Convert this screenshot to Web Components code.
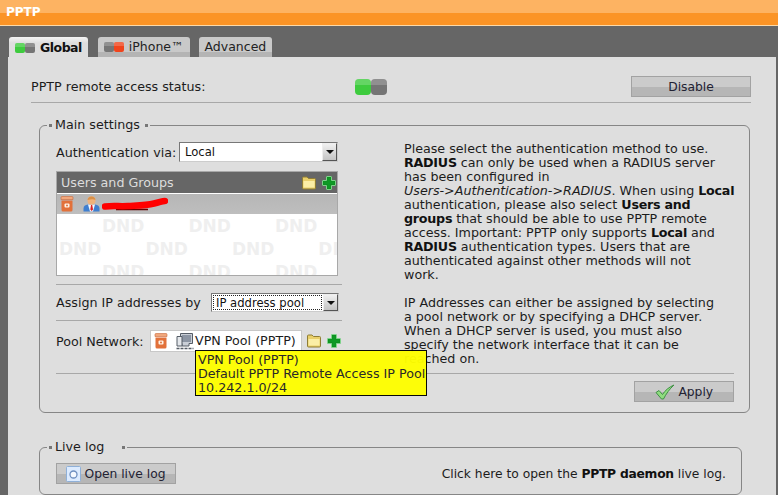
<!DOCTYPE html>
<html lang="en">
  <head>
    <meta charset="UTF-8">
    <title>PPTP</title>
    <style>
      html, body { margin: 0; height: 495px; overflow: hidden; background: #666; }
      body { font: 12.7px/14px "DejaVu Sans", Verdana, sans-serif; color: #1c1c1c; }
      b { color: #111; letter-spacing: -.25px; }
    </style>
  </head>
  <body>
    <pv-header>PPTP</pv-header>
    <pv-tabs>
      <pv-tab active><pv-led on="left"></pv-led>Global</pv-tab>
      <pv-tab><pv-led on="right" tone="red"></pv-led>iPhone™</pv-tab>
      <pv-tab>Advanced</pv-tab>
    </pv-tabs>
    <pv-panel>
      <pv-status>
        PPTP remote access status:
        <pv-led slot="led" on="left" size="big"></pv-led>
        <pv-button slot="action" width="120">Disable</pv-button>
      </pv-status>

      <pv-group label="Main settings">
        <pv-form>
          <pv-field slot="left" label="123" pad="0 0 9px">
            Authentication via:
            <pv-select slot="control" width="159" height="20">Local</pv-select>
          </pv-field>
          <pv-list slot="left" title="Users and Groups">
            <pv-icon name="trash"></pv-icon>
            <pv-icon name="user"></pv-icon>
            <pv-icon name="scribble"></pv-icon>
          </pv-list>
          <pv-field slot="left" label="155" line above="8" pad="8px 0 8px">
            Assign IP addresses by
            <pv-select slot="control" width="128" height="19" focus>IP address pool</pv-select>
          </pv-field>
          <pv-field slot="left" label="94" line pad="9px 0 0">
            Pool Network:
            <pv-chip slot="control">
              VPN Pool (PPTP)
              <pv-tooltip slot="tip">VPN Pool (PPTP)<br>Default PPTP Remote Access IP Pool<br>10.242.1.0/24</pv-tooltip>
            </pv-chip>
          </pv-field>

          <div slot="right">
            Please select the authentication method to use.<br>
            <b>RADIUS</b> can only be used when a RADIUS server<br>
            has been configured in<br>
            <i>Users-&gt;Authentication-&gt;RADIUS</i>. When using <b>Local</b><br>
            authentication, please also select <b>Users and</b><br>
            <b>groups</b> that should be able to use PPTP remote<br>
            access. Important: PPTP only supports <b>Local</b> and<br>
            <b>RADIUS</b> authentication types. Users that are<br>
            authenticated against other methods will not<br>
            work.<br>
            <br>
            IP Addresses can either be assigned by selecting<br>
            a pool network or by specifying a DHCP server.<br>
            When a DHCP server is used, you must also<br>
            specify the network interface that it can be<br>
            reached on.
          </div>

          <pv-button slot="footer" width="100" icon="check">Apply</pv-button>
        </pv-form>
      </pv-group>

      <pv-group label="Live log" tail="18" top="27">
        <pv-logrow>
          <pv-button slot="action" width="120" icon="log">Open live log</pv-button>
          Click here to open the <b>PPTP daemon</b> live log.
        </pv-logrow>
      </pv-group>
    </pv-panel>

    <script>
      const icons = {
        folder: `<svg width="16" height="14" viewBox="0 0 16 14">
          <path d="M1.5 3V2Q1.5 1 2.5 1H6L7.5 2.5H13.5Q14.5 2.5 14.5 3.500V12Q14.500 13 13.500 13H2.500Q1.500 13 1.500 12Z" fill="#e9cf6a" stroke="#8f7d35"/>
          <path d="M2.500 5H13.500V11.500H2.500Z" fill="#fbeea6"/>
        </svg>`,
        plus: `<svg width="16" height="16" viewBox="0 0 16 16">
          <path d="M6 1.500H10Q10.500 1.500 10.500 2V5.500H14Q14.500 5.500 14.500 6V10Q14.500 10.500 14 10.500H10.500V14Q10.500 14.500 10 14.500H6Q5.500 14.500 5.500 14V10.500H2Q1.500 10.500 1.500 10V6Q1.500 5.500 2 5.500H5.500V2Q5.500 1.500 6 1.500Z" fill="#0f8f22" stroke="#7ed48a"/>
          <path d="M6.500 3H9.500V6.500H13V9H9.500V13H6.500V9H3V6.500H6.500Z" fill="#0e9a25"/>
        </svg>`,
        trash: `<svg width="14" height="16" viewBox="0 0 14 16">
          <path d="M1 1.500Q1 .5 2 .5H12Q13 .5 13 1.500V3.500H1Z" fill="#f1a77c" stroke="#c9683a" stroke-width=".6"/>
          <path d="M1.500 4.500H12.500V14Q12.500 15.500 11 15.500H3Q1.500 15.500 1.500 14Z" fill="#e2713a"/>
          <rect x="4.500" y="7.500" width="5" height="4" rx="1" fill="#fff3e6"/>
          <circle cx="7" cy="9.500" r="1" fill="#e2713a"/>
        </svg>`,
        user: `<svg width="17" height="16" viewBox="0 0 17 16">
          <path d="M.5 15.500V12.500Q.5 9 5 8.500H12Q16.500 9 16.500 12.500V15.500Z" fill="#3f7fd0"/>
          <path d="M5 8.500H12L10 15.500H7Z" fill="#f4f8ff"/>
          <path d="M8 9H9.200L10 13.500 8.600 15 7.300 13.500Z" fill="#d22"/>
          <ellipse cx="8.500" cy="4.500" rx="4" ry="4.200" fill="#f0b27a"/>
          <path d="M4.500 4Q5 .5 8.500 .5T12.500 4Q10 2.500 4.500 4Z" fill="#d89048"/>
        </svg>`,
        scribble: `<svg width="66" height="14" viewBox="0 0 66 14">
          <path d="M14 12.500H46" stroke="#600" stroke-width="1.500"/>
          <path d="M3 9.500C10 8.500 18 9.500 26 9S44 8.500 52 6.500 60 4 63 4" fill="none" stroke="#f00" stroke-width="6.500" stroke-linecap="round"/>
        </svg>`,
        network: `<svg width="18" height="18" viewBox="0 0 18 18">
          <path d="M4.500 1.500H16.500V11.500H13V14H6V11.500H4.500Z" fill="#c9ced6" stroke="#555c66"/>
          <path d="M6 3H15V10H6Z" fill="#8c95a3"/>
          <path d="M1 4.500H6V14H1Z" fill="#e5e8ec" stroke="#555c66"/>
          <path d="M.5 16.500H17.500" stroke="#555c66" stroke-width="1.500" stroke-dasharray="3 1"/>
        </svg>`,
        check: `<svg width="20" height="16" viewBox="0 0 20 16">
          <path d="M1 8.500L4 6.500 7.500 10.500C10 6.500 14 3 19 1C14.500 5 11 10 8.500 15H6.500Z" fill="#8fdc7f" stroke="#3f8f45"/>
        </svg>`,
        log: `<svg width="15" height="16" viewBox="0 0 15 16">
          <rect x=".5" y=".5" width="14" height="15" rx="1" fill="#dcebff" stroke="#8fb0d8"/>
          <circle cx="7.500" cy="8.500" r="3.500" fill="#f5f9ff" stroke="#6f8fc0" stroke-width="1.300"/>
        </svg>`
      }

      // every element is just a template and a shadow root, small helper for that
      const define = (name, html) => {
        const template = document.createElement('template')
        template.innerHTML = html
        customElements.define(name, class extends HTMLElement {
          constructor() {
            super()
            this.attachShadow({ mode: 'open' }).appendChild(template.content.cloneNode(true))
          }
        })
      }

      define('pv-header', `
        <style>
          :host { display: block; height: 25px; border-bottom: 1px solid #fcd9a8; background: linear-gradient(#fdb362 0 13px, #fb9426 13px); }
          div { padding: 5px 0 0 6px; color: #fff; font-weight: bold; font-size: 12px; }
        </style>
        <div><slot></slot></div>`)

      define('pv-tabs', `
        <style>
          :host { display: flex; gap: 9px; height: 20px; padding: 11px 0 0 9px; align-items: flex-start; position: relative; z-index: 1; font-size: 12.5px; }
          ::slotted(:first-child) { margin-right: 1px; }
        </style>
        <slot></slot>`)

      define('pv-tab', `
        <style>
          :host { display: flex; align-items: center; gap: 5px; height: 20px; padding: 0 6px; border-radius: 3px 3px 0 0; background: linear-gradient(#c9c9c9 0 15px, #b4b4b4 15px); color: #222; }
          :host([active]) { height: 21px; background: linear-gradient(#f4f4f4, #dedede 6px); font-weight: bold; letter-spacing: -.5px; color: #111; }
        </style>
        <slot></slot>`)

      customElements.define('pv-led', class extends HTMLElement {
        constructor() {
          super()
          const big = this.getAttribute('size') === 'big'
          const s = big ? 16 : 10
          const on = this.getAttribute('tone') === 'red' ? '#f0441c' : '#3ecb3e'
          const left = this.getAttribute('on') === 'left' ? on : '#757575'
          const right = this.getAttribute('on') === 'right' ? on : '#757575'
          this.attachShadow({ mode: 'open' }).innerHTML = `
            <style>
              :host { display: inline-flex; }
              i { display: block; width: ${s}px; height: ${s}px; border-radius: ${big ? 4 : 2}px; }
              i::before { content: ""; display: block; height: 40%; border-radius: ${big ? '4px 4px' : '2px 2px'} 0 0; background: #fff3; }
            </style>
            <i style="background:${left}"></i><i style="background:${right}"></i>`
        }
      })

      customElements.define('pv-icon', class extends HTMLElement {
        constructor() {
          super()
          this.attachShadow({ mode: 'open' }).innerHTML = `
            <style>:host { display: inline-flex; } svg { display: block; }</style>
            ${icons[this.getAttribute('name')]}`
        }
      })

      customElements.define('pv-button', class extends HTMLElement {
        constructor() {
          super()
          const icon = this.getAttribute('icon')
          this.attachShadow({ mode: 'open' }).innerHTML = `
            <style>
              :host { display: flex; align-items: center; justify-content: center; gap: 3px; box-sizing: border-box; height: 21px; padding-top: 1px; width: ${this.getAttribute('width')}px; border: 1px solid #a2a2a2; background: linear-gradient(#cbcbcb 0 10px, #b6b6b6 10px); color: #223; font-size: 12.3px; letter-spacing: 0; }
              svg { margin-top: -1px; }
            </style>
            ${icon ? icons[icon] : ''}<slot></slot>`
        }
      })

      define('pv-panel', `
        <style>
          :host { display: block; height: 500px; margin: 0 2px 0 8px; padding: 19px 25px 0 23px; background: #dedede; }
        </style>
        <slot></slot>`)

      define('pv-status', `
        <style>
          :host { display: flex; align-items: center; height: 21px; padding-bottom: 5px; border-bottom: 1px solid #a8a8a8; }
          .text { width: 324px; padding-top: 1px; }
          .led { flex: 1; display: flex; }
        </style>
        <div class="text"><slot></slot></div>
        <div class="led"><slot name="led"></slot></div>
        <slot name="action"></slot>`)

      customElements.define('pv-group', class extends HTMLElement {
        constructor() {
          super()
          const tail = this.getAttribute('tail') || 5
          this.attachShadow({ mode: 'open' }).innerHTML = `
            <style>
              :host { display: block; margin: ${this.getAttribute('top') || 15}px 9px 0 8px; }
              fieldset { margin: 0; padding: 0 15px 10px 16px; border: 1px solid #868686; border-radius: 6px; }
              legend { display: flex; align-items: center; margin-left: -9px; padding: 0 0 0 2px; height: 14px; line-height: 14px; }
              legend::before, legend::after { content: ""; width: 3px; height: 3px; background: #777; }
              legend::before { margin-right: 3px; }
              legend::after { margin-left: ${tail}px; margin-right: 2px; }
            </style>
            <fieldset>
              <legend>${this.getAttribute('label')}</legend>
              <slot></slot>
            </fieldset>`
        }
      })

      define('pv-form', `
        <style>
          :host { display: grid; grid-template-columns: 286px 1fr; column-gap: 62px; padding-top: 10px; }
          .left { display: flex; flex-direction: column; }
          .right { white-space: nowrap; }
          .footer { grid-column: 1 / 3; display: flex; justify-content: flex-end; margin-top: 7px; padding-top: 7px; border-top: 1px solid #a8a8a8; }
        </style>
        <div class="left"><slot name="left"></slot></div>
        <div class="right"><slot name="right"></slot></div>
        <div class="footer"><slot name="footer"></slot></div>`)

      customElements.define('pv-field', class extends HTMLElement {
        constructor() {
          super()
          this.attachShadow({ mode: 'open' }).innerHTML = `
            <style>
              :host { display: flex; align-items: center; padding: ${this.getAttribute('pad')}; margin-top: ${this.getAttribute('above') || 0}px; }
              :host([line]) { border-top: 1px solid #a8a8a8; }
              .label { flex: none; width: ${this.getAttribute('label')}px; padding-top: 1px; white-space: nowrap; }
            </style>
            <div class="label"><slot></slot></div><slot name="control"></slot>`
        }
      })

      customElements.define('pv-select', class extends HTMLElement {
        constructor() {
          super()
          this.attachShadow({ mode: 'open' }).innerHTML = `
            <style>
              :host { display: flex; box-sizing: border-box; height: ${this.getAttribute('height')}px; width: ${this.getAttribute('width')}px; background: #fff; border: 1px solid #8d8d8d; border-color: #777 #ccc #ccc #777; font-size: 11.6px; line-height: 17px; color: #111; }
              .value { flex: 1; margin: 1px; padding-left: 4px; }
              :host([focus]) .value { padding-left: 3px; outline: 1px dotted #222; outline-offset: -1px; }
              .arrow { display: flex; align-items: center; justify-content: center; width: 15px; background: linear-gradient(#f0f0f0, #c4c4c4); border: 1px solid; border-color: #eee #555 #555 #eee; box-sizing: border-box; }
              .arrow::after { content: ""; border: 4px solid transparent; border-top: 4px solid #111; border-bottom: 0; }
            </style>
            <div class="value"><slot></slot></div>
            <div class="arrow"></div>`
        }
      })

      customElements.define('pv-list', class extends HTMLElement {
        constructor() {
          super()
          const row = '<span>DND</span>'.repeat(4)
          this.attachShadow({ mode: 'open' }).innerHTML = `
            <style>
              :host { display: block; position: relative; box-sizing: border-box; width: 282px; height: 105px; border: 1px solid #a8a8a8; background: #fff; overflow: hidden; }
              .head { display: flex; align-items: center; gap: 4px; height: 21px; padding-left: 4px; background: #666; color: #ddd; border-bottom: 1px solid #fff; }
              .head span { flex: 1; }
              .row { position: relative; display: flex; align-items: center; height: 20px; padding-left: 3px; background: linear-gradient(#b6b6b6, #bebebe); }
              ::slotted(pv-icon:nth-child(2)) { margin-left: 9px; }
              ::slotted(pv-icon:nth-child(3)) { margin-left: 2px; }
              /* watermark sits behind the rows */
              .mark { position: absolute; top: 43px; left: 2px; width: 360px; color: #efefef; font-weight: bold; font-size: 17px; line-height: 23px; }
              .mark div { display: flex; gap: 44px; white-space: nowrap; }
              .mark div:nth-child(odd) { margin-left: 43px; }
            </style>
            <div class="mark"><div>${row}</div><div>${row}</div><div>${row}</div></div>
            <div class="head"><span>${this.getAttribute('title')}</span>${icons.folder}${icons.plus}</div>
            <div class="row"><slot></slot></div>`
        }
      })

      customElements.define('pv-chip', class extends HTMLElement {
        constructor() {
          super()
          this.attachShadow({ mode: 'open' }).innerHTML = `
            <style>
              :host { display: flex; align-items: center; gap: 4px; position: relative; }
              .box { display: flex; align-items: center; box-sizing: border-box; width: 152px; height: 22px; padding-left: 3px; background: #fff; border: 1px solid #c8c8c8; }
              .box svg:nth-child(2) { margin: 0 1px 0 8px; }
              .text { white-space: nowrap; }
            </style>
            <div class="box">${icons.trash}${icons.network}<span class="text"><slot></slot></span></div>
            ${icons.folder}${icons.plus}
            <slot name="tip"></slot>`
        }
      })

      define('pv-tooltip', `
        <style>
          :host { position: absolute; left: 45px; top: 20px; z-index: 2; box-sizing: border-box; width: 232px; height: 46px; padding: 2px 0 0 2px; background: #ff0; border: 1px solid #000; opacity: .96; white-space: nowrap; color: #222; }
        </style>
        <slot></slot>`)

      define('pv-logrow', `
        <style>
          :host { display: flex; align-items: center; justify-content: space-between; padding-top: 9px; font-size: 12.3px; }
        </style>
        <slot name="action"></slot><span><slot></slot></span>`)
    </script>
  </body>
</html>
